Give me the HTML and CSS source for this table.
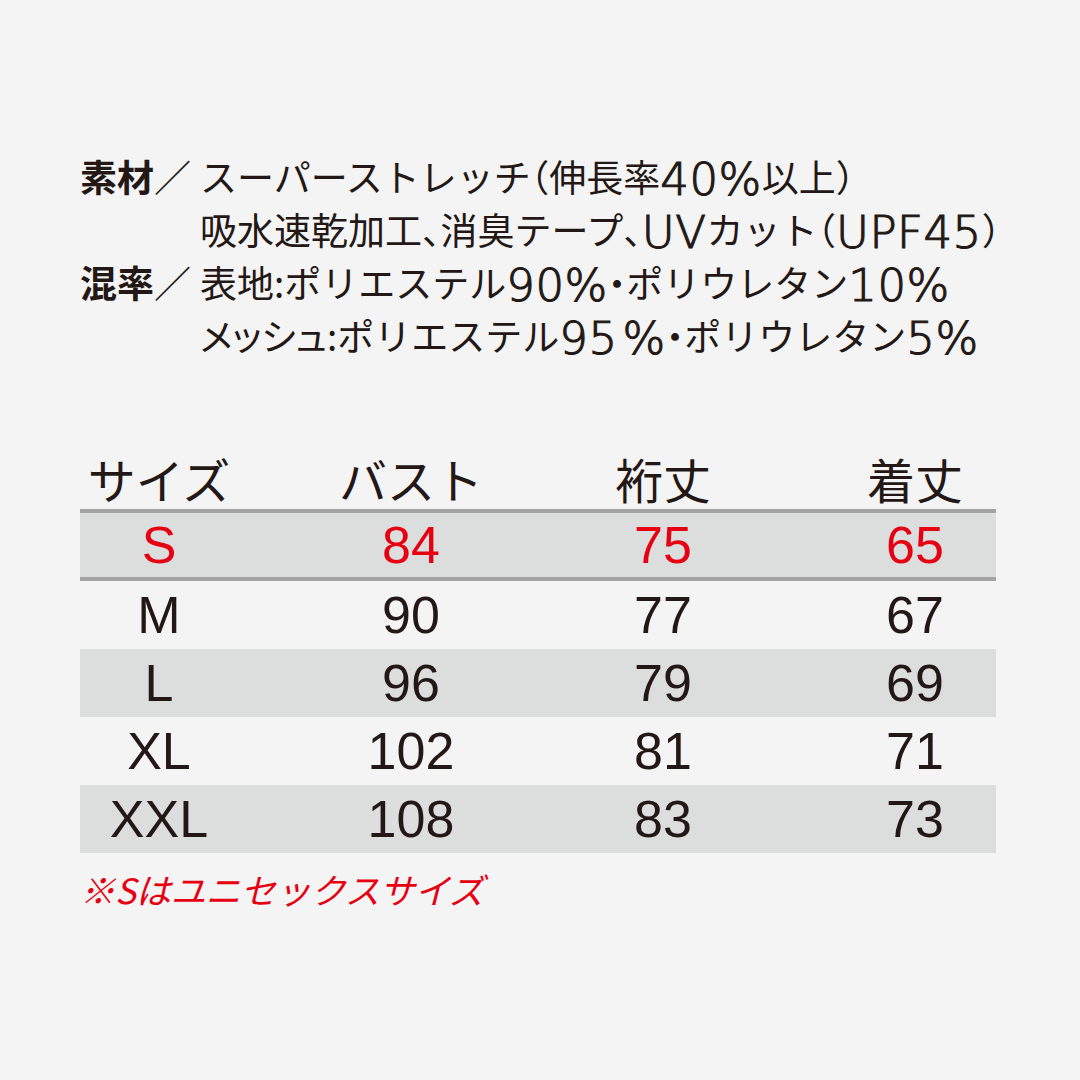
FILE: index.html
```html
<!DOCTYPE html>
<html lang="ja">
<head>
<meta charset="utf-8">
<title>サイズ表</title>
<link rel="stylesheet" href="styles.css">
</head>
<body>
<main class="page">
  <section class="spec">
    <div class="spec-row">
      <div class="spec-label"><b>素材</b>／</div>
      <div class="spec-value">
        <div>スーパーストレッチ<span class="h">（</span>伸長率<span class="num">40%</span>以上<span class="h">）</span></div>
        <div>吸水速乾加工<span class="h">、</span>消臭テープ<span class="h">、</span><span class="num">UV</span>カット<span class="h">（</span><span class="num">UPF45</span><span class="h">）</span></div>
      </div>
    </div>
    <div class="spec-row">
      <div class="spec-label"><b>混率</b>／</div>
      <div class="spec-value">
        <div>表地:ポリエステル<span class="num">90%</span><span class="h">・</span>ポリウレタン<span class="num">10%</span></div>
        <div><span class="p">メッシュ</span>:ポリエステル<span class="num">95<span class="pct">%</span></span><span class="h">・</span>ポリウレタン<span class="num">5%</span></div>
      </div>
    </div>
  </section>

  <section class="size-table">
    <div class="t-row t-head">
      <div>サイズ</div><div>バスト</div><div>裄丈</div><div>着丈</div>
    </div>
    <div class="t-row t-body t-accent">
      <div>S</div><div>84</div><div>75</div><div>65</div>
    </div>
    <div class="t-row t-body">
      <div>M</div><div>90</div><div>77</div><div>67</div>
    </div>
    <div class="t-row t-body t-shade">
      <div>L</div><div>96</div><div>79</div><div>69</div>
    </div>
    <div class="t-row t-body">
      <div>XL</div><div>102</div><div>81</div><div>71</div>
    </div>
    <div class="t-row t-body t-shade">
      <div>XXL</div><div>108</div><div>83</div><div>73</div>
    </div>
  </section>

  <p class="note">※Sはユニセックスサイズ</p>
</main>
</body>
</html>
```

FILE: styles.css
```css
html, body {
  margin: 0;
  padding: 0;
  background: #f4f4f4;
}

body {
  width: 1080px;
  height: 1080px;
  overflow: hidden;
  color: #231815;
  font-family: "Noto Sans CJK JP", "Noto Sans", sans-serif;
}

.page {
  padding: 150px 84px 0 80px;
}

.spec {
  display: flex;
  flex-direction: column;
  font-size: 37px;
  line-height: 53px;
}

.spec-row {
  display: flex;
}

.spec-label {
  width: 120px;
  flex: none;
  white-space: nowrap;
  font-weight: 400;
}

.spec-label b {
  font-weight: 700;
}

.spec-value {
  white-space: nowrap;
}

.h {
  font-feature-settings: "halt" 1;
}

.p {
  font-feature-settings: "palt" 1;
}

.num {
  font-family: "DejaVu Sans", sans-serif;
  font-size: 45px;
  line-height: 0;
  vertical-align: -3px;
  font-weight: 200;
  letter-spacing: 0.5px;
  -webkit-text-stroke: 1.1px currentColor;
}

.pct {
  margin-left: 5px;
}

.size-table {
  margin-top: 78px;
  width: 916px;
}

.t-row {
  display: grid;
  grid-template-columns: repeat(4, 158px);
  column-gap: 94px;
  justify-items: center;
  align-items: center;
}

.t-head {
  height: 69px;
  box-sizing: border-box;
  padding-top: 14px;
  align-items: start;
  font-size: 48px;
  line-height: 48px;
  color: #231815;
}

.t-body {
  height: 68px;
  font-family: "Liberation Sans", Arial, sans-serif;
  font-size: 52px;
  line-height: 52px;
  color: #231815;
}

.t-shade {
  background: #dcdddd;
}

.t-accent {
  height: 72px;
  box-sizing: border-box;
  background: #dcdddd;
  border-top: 4px solid #a3a3a3;
  border-bottom: 4px solid #a3a3a3;
  color: #e60012;
}

.note {
  margin: 16px 0 0;
  font-size: 35px;
  line-height: 40px;
  font-style: italic;
  color: #e60012;
  white-space: nowrap;
}
```
